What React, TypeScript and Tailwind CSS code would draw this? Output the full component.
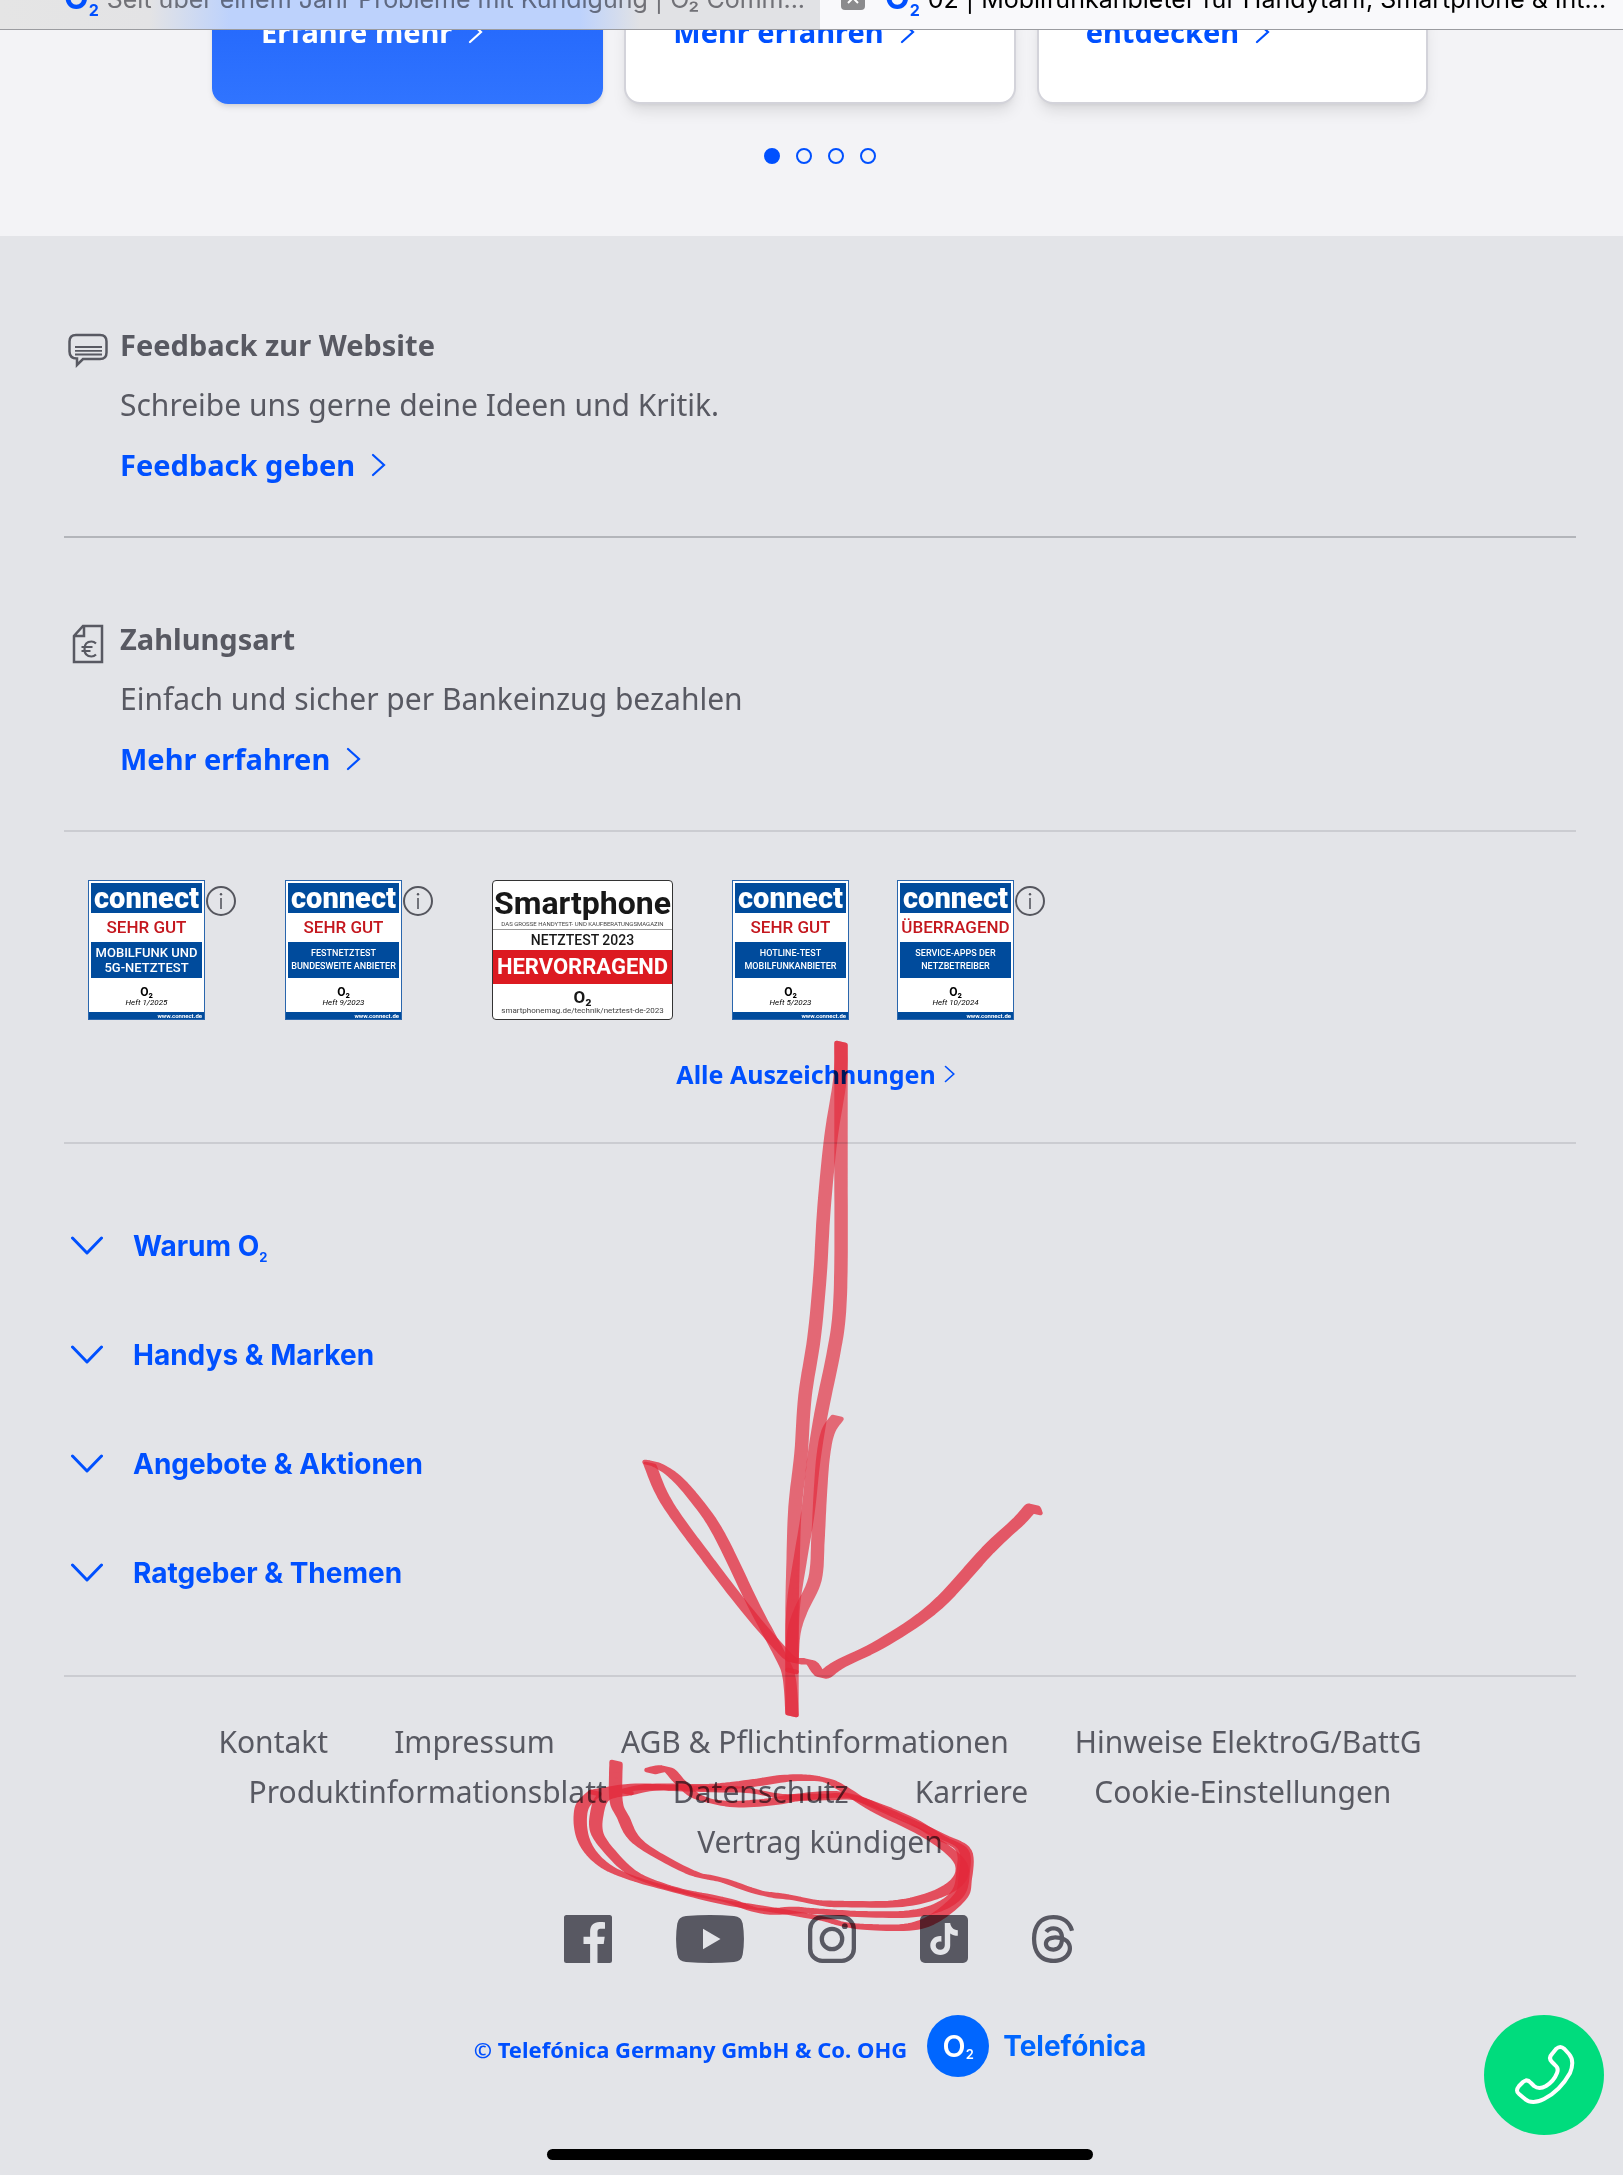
import { useState } from 'react'
import type { ReactNode } from 'react'
import { SiThreads } from 'react-icons/si'

const footerLinks = [
  ['Kontakt', 'Impressum', 'AGB & Pflichtinformationen', 'Hinweise ElektroG/BattG'],
  ['Produktinformationsblatt', 'Datenschutz', 'Karriere', 'Cookie-Einstellungen'],
  ['Vertrag kündigen']
]

type Point = [number, number]

interface Stroke {
  opacity: number
  points: Point[]
}

// Marker strokes, in page pixels
const strokes: Stroke[] = [
  {
    opacity: 0.66,
    points: [[841, 1044], [840, 1079], [831, 1137], [824, 1208], [820, 1275], [814, 1338], [805, 1396], [801, 1454], [795, 1508], [793, 1566], [792, 1610], [792, 1671]]
  },
  {
    opacity: 0.66,
    points: [[841, 1044], [841, 1164], [841, 1262], [839, 1316], [833, 1356], [822, 1409], [814, 1458], [808, 1512], [800, 1561], [793, 1610], [792, 1671]]
  },
  {
    opacity: 0.66,
    points: [[792, 1660], [794, 1632], [801, 1610], [815, 1579], [818, 1539], [820, 1499], [823, 1458], [828, 1432], [837, 1418]]
  },
  {
    opacity: 0.75,
    points: [[792, 1714], [789, 1677], [780, 1655], [754, 1606], [719, 1534], [695, 1499], [674, 1476], [657, 1465], [649, 1463]]
  },
  {
    opacity: 0.75,
    points: [[650, 1465], [667, 1503], [709, 1561], [747, 1610], [778, 1646], [793, 1660], [810, 1662], [818, 1672], [824, 1675], [840, 1664], [884, 1642], [936, 1606], [988, 1550], [1019, 1521], [1032, 1507], [1036, 1512]]
  },
  { opacity: 0.66, points: [[792, 1671], [792, 1714]] },
  {
    opacity: 0.8,
    points: [[616, 1763], [616, 1800], [623, 1817], [639, 1843], [690, 1872], [722, 1880], [761, 1893], [789, 1897], [820, 1903], [842, 1904], [893, 1904], [926, 1898], [951, 1887], [962, 1873], [956, 1857], [926, 1835], [876, 1810], [842, 1788], [821, 1779], [789, 1778], [753, 1783], [714, 1787], [655, 1787], [627, 1792]]
  },
  {
    opacity: 0.8,
    points: [[627, 1792], [604, 1797], [597, 1813], [597, 1833], [611, 1853], [631, 1872], [655, 1883], [686, 1892], [726, 1900], [761, 1911], [797, 1910], [813, 1911], [859, 1914], [909, 1914], [939, 1907], [958, 1893], [963, 1873], [962, 1850], [939, 1837], [905, 1817], [855, 1798], [825, 1797], [785, 1797], [746, 1790], [710, 1789], [674, 1788], [635, 1787], [595, 1793]]
  },
  {
    opacity: 0.8,
    points: [[595, 1793], [582, 1807], [581, 1830], [589, 1850], [607, 1867], [635, 1879], [674, 1890], [722, 1902], [761, 1908], [820, 1918], [842, 1924], [867, 1927], [909, 1927], [935, 1918], [960, 1897], [965, 1880], [965, 1850], [939, 1835], [884, 1810], [846, 1795], [801, 1797], [769, 1802], [730, 1804], [698, 1797], [680, 1782], [667, 1769], [651, 1771]]
  }
]

// Catmull-Rom sampling through the points
function smooth(points: Point[]): Point[] {
  const out: Point[] = []
  for (let i = 0; i < points.length - 1; i++) {
    const p0 = points[i - 1] ?? points[i]
    const p1 = points[i]
    const p2 = points[i + 1]
    const p3 = points[i + 2] ?? p2
    for (let s = 0; s < 8; s++) {
      const t = s / 8
      const at = (k: 0 | 1) =>
        0.5 * (2 * p1[k] + (p2[k] - p0[k]) * t + (2 * p0[k] - 5 * p1[k] + 4 * p2[k] - p3[k]) * t * t + (3 * p1[k] - p0[k] - 3 * p2[k] + p3[k]) * t * t * t)
      out.push([at(0), at(1)])
    }
  }
  out.push(points[points.length - 1])
  return out
}

// Sweeps a flat pen tip along the line
function penPath(points: Point[]) {
  const line = smooth(points)
  const hw = 4.4
  let d = ''
  for (let i = 0; i < line.length - 1; i++) {
    const [x1, y1] = line[i]
    const [x2, y2] = line[i + 1]
    const quad = [[x1 - hw, y1 - 1], [x1 + hw, y1 + 1], [x2 + hw, y2 + 1], [x2 - hw, y2 - 1]]
    if (y2 < y1) quad.reverse()
    d += 'M' + quad.map(([x, y]) => `${x.toFixed(1)} ${y.toFixed(1)}`).join('L') + 'Z'
  }
  return d
}

function Annotation() {
  return (
    <svg className="pointer-events-none absolute top-0 left-0 mix-blend-multiply" width="1100" height="1960" viewBox="0 0 1100 1960" aria-hidden="true">
      {strokes.map((stroke, i) => (
        <path
          key={i}
          d={penPath(stroke.points)}
          opacity={stroke.opacity}
          fill="#ff2d40"
          stroke="#ff2d40"
          strokeWidth="4.600"
          strokeLinejoin="round"
        />
      ))}
    </svg>
  )
}

function Chevron({ small = false }: { small?: boolean }) {
  return (
    <svg className={small ? 'h-5 w-3' : 'h-6 w-4'} viewBox="0 0 16 24" fill="none" stroke="currentColor" strokeWidth="2.2" strokeLinecap="round" aria-hidden="true">
      <path d="M2 2l11 10L2 22" />
    </svg>
  )
}

function TabIcon() {
  return (
    <span className="flex items-end font-['Inter',sans-serif] text-[32px] leading-8 font-bold text-[#0050ff]">
      O<sub className="bottom-0 translate-y-1 text-base leading-4">2</sub>
    </span>
  )
}

function TabBar() {
  return (
    <header className="flex h-[30px] overflow-hidden border-b border-[#9b9ca0] font-['Inter',sans-serif] text-[25px] leading-[30px]">
      <button className="relative flex h-[30px] flex-1 items-end bg-[linear-gradient(90deg,#e5e5e5_0,#e3e3e5_150px,#bdd2fc_230px,#bdd2fc_580px,#e1e2e5_640px)] pb-4 pl-16 text-left">
        <TabIcon />
        <span className="ml-2 whitespace-nowrap text-[#808084] mix-blend-multiply">Seit über einem Jahr Probleme mit Kündigung | O₂ Comm...</span>
      </button>
      <button className="flex h-[30px] w-[803px] items-end bg-[#f9f9fb] pb-4 pl-[21px] text-left text-black">
        <span className="mb-1 flex size-6 items-center justify-center rounded bg-[#8b8b8d]">
          <svg className="size-4" viewBox="0 0 16 16" stroke="white" strokeWidth="2" aria-hidden="true">
            <path d="M3 3l10 10M13 3L3 13" />
          </svg>
        </span>
        <span className="ml-5 flex items-end">
          <TabIcon />
          <span className="ml-2 whitespace-nowrap">02 | Mobilfunkanbieter für Handytarif, Smartphone &amp; Int...</span>
        </span>
      </button>
    </header>
  )
}

function TeaserCards() {
  return (
    <section className="h-[206px] overflow-hidden bg-[#f3f3f6] pr-[195px] pl-[212px]">
      <div className="grid grid-cols-3 gap-[21px] text-[29px] leading-10 font-bold">
        <div className="-mt-5 h-[94px] rounded-b-2xl bg-[linear-gradient(#2468fc,#3074ff)] pl-[49px] text-white shadow-md">
          <a href="#" className="inline-flex items-center gap-4 pt-0.5">Erfahre mehr <Chevron /></a>
        </div>
        <div className="-mt-5 h-[94px] rounded-b-2xl border-2 border-[#d3d3da] bg-white pl-[47px] text-[#0050ff] shadow-lg">
          <a href="#" className="inline-flex items-center gap-4">Mehr erfahren <Chevron /></a>
        </div>
        <div className="-mt-5 h-[94px] rounded-b-2xl border-2 border-[#d3d3da] bg-white pl-[47px] text-[#0050ff] shadow-lg">
          <a href="#" className="inline-flex items-center gap-4">entdecken <Chevron /></a>
        </div>
      </div>
      <div className="mt-[44px] flex justify-center gap-4">
        {[0, 1, 2, 3].map((i) => (
          <button
            key={i}
            aria-label={`Seite ${i + 1}`}
            className={i === 0 ? 'size-4 rounded-full border-2 border-[#0050ff] bg-[#0050ff]' : 'size-4 rounded-full border-2 border-[#0050ff]'}
          />
        ))}
      </div>
    </section>
  )
}

interface InfoBlockProps {
  icon: ReactNode
  title: string
  text: string
  link: string
}

function InfoBlock({ icon, title, text, link }: InfoBlockProps) {
  return (
    <div className="flex text-[30px] leading-[60px]">
      <div className="flex h-[70px] w-14 shrink-0 items-center">{icon}</div>
      <div>
        <h3 className="text-[29px] font-bold">{title}</h3>
        <p>{text}</p>
        <a href="#" className="inline-flex items-center gap-4 text-[29px] font-bold text-[#0050ff]">
          {link} <Chevron />
        </a>
      </div>
    </div>
  )
}

function SpeechIcon() {
  return (
    <svg className="ml-1 h-9 w-10" viewBox="0 0 40 36" fill="none" stroke="currentColor" strokeWidth="2.5" aria-hidden="true">
      <path d="M8 3h24q6.500 0 6.500 6.500v11q0 6.500-6.500 6.500H15l-6 6v-6.500q-7.500 0-7.500-7v-10Q1.500 3 8 3z" />
      <path d="M7 15h27M7 18.800h27M7 22.500h27" strokeWidth="1.800" />
    </svg>
  )
}

function InvoiceIcon() {
  return (
    <svg className="ml-2 h-10 w-8" viewBox="0 0 32 40" fill="none" stroke="currentColor" strokeWidth="2.500" aria-hidden="true">
      <path d="M11 2h19v36H2V12L11 2zM12 2v10H2" />
      <path d="M24 19.500q-2-2-4.500-2-7 0-7 7.500t7 7.500q2.500 0 4.500-2M9.500 23h11M9.500 27h9" strokeWidth="2.200" />
    </svg>
  )
}

function InfoButton() {
  return (
    <button aria-label="Information" className="ml-px mt-1.5 flex size-[30px] shrink-0 items-center justify-center self-start rounded-full border-2 border-[#55565e]">
      <svg className="h-4 w-1" viewBox="0 0 4 16" aria-hidden="true">
        <circle cx="2" cy="1.300" r="1.200" fill="#55565e" />
        <path d="M2 5v11" stroke="#55565e" strokeWidth="1.600" />
      </svg>
    </button>
  )
}

interface AwardProps {
  rating: string
  lines: string[]
  issue: string
  large?: boolean
}

function ConnectAward({ rating, lines, issue, large = false }: AwardProps) {
  return (
    <div className="flex h-[140px] w-[117px] shrink-0 flex-col border border-[#2a66ad] bg-white text-center font-['Roboto',sans-serif]">
      <div className="mx-0.5 mt-0.5 h-[30px] bg-[#004b9c] text-[29px] leading-[30px] font-black text-white">connect</div>
      <div className="h-[29px] text-[17px] leading-[29px] font-medium text-[#c4171e]">{rating}</div>
      <div className={large ? 'mx-0.5 flex h-9 flex-col justify-center bg-[#004b9c] text-[13px] leading-[15px] font-medium whitespace-nowrap text-white' : 'mx-0.5 flex h-9 flex-col justify-center bg-[#004b9c] text-[9px] leading-[13px] font-medium whitespace-nowrap text-white'}>
        {lines.map((line) => (
          <div key={line}>{line}</div>
        ))}
      </div>
      <div className="mt-2 text-[12px] leading-3 font-bold text-black">O₂</div>
      <div className="text-[8px] leading-[10px] italic text-black">{issue}</div>
      <div className="mt-auto h-[7px] bg-[#004b9c] pr-0.5 text-right text-[6px] leading-[7px] font-bold text-white">www.connect.de</div>
    </div>
  )
}

function SmartphoneAward() {
  return (
    <div className="flex h-[140px] w-[181px] shrink-0 flex-col overflow-hidden rounded border border-[#333] bg-white text-center font-['Roboto',sans-serif] whitespace-nowrap text-[#181818]">
      <div className="mt-1 h-9 text-[32px] leading-9 font-bold">Smartphone</div>
      <div className="h-[9px] border-b border-[#999] text-[6px] leading-[6px] text-[#444]">DAS GROSSE HANDYTEST- UND KAUFBERATUNGSMAGAZIN</div>
      <div className="h-5 text-[14px] leading-5 font-medium">NETZTEST 2023</div>
      <div className="h-[34px] bg-[#dc1a21] text-[22px] leading-[34px] font-bold text-white">HERVORRAGEND</div>
      <div className="mt-1 h-[18px] text-[17px] leading-[18px] font-bold">O₂</div>
      <div className="text-[8px] leading-[10px] text-[#444]">smartphonemag.de/technik/netztest-de-2023</div>
    </div>
  )
}

function AwardList() {
  return (
    <div className="border-b-2 border-[#cbccd1] pt-12 pb-12">
      <div className="flex pl-6">
        <div className="flex w-[197px]">
          <ConnectAward rating="SEHR GUT" lines={['MOBILFUNK UND', '5G-NETZTEST']} issue="Heft 1/2025" large />
          <InfoButton />
        </div>
        <div className="flex w-[207px]">
          <ConnectAward rating="SEHR GUT" lines={['FESTNETZTEST', 'BUNDESWEITE ANBIETER']} issue="Heft 9/2023" />
          <InfoButton />
        </div>
        <div className="flex w-60">
          <SmartphoneAward />
        </div>
        <div className="flex w-[165px]">
          <ConnectAward rating="SEHR GUT" lines={['HOTLINE-TEST', 'MOBILFUNKANBIETER']} issue="Heft 5/2023" />
        </div>
        <div className="flex">
          <ConnectAward rating="ÜBERRAGEND" lines={['SERVICE-APPS DER', 'NETZBETREIBER']} issue="Heft 10/2024" />
          <InfoButton />
        </div>
      </div>
      <div className="mt-[34px] flex justify-center pr-2 text-[25px] leading-10 font-bold">
        <a href="#" className="inline-flex items-center gap-2 text-[#0050ff]">
          Alle Auszeichnungen <Chevron small />
        </a>
      </div>
    </div>
  )
}

function Accordion() {
  const [open, setOpen] = useState<number | null>(null)
  const items: ReactNode[] = [
    <>Warum O<sub className="bottom-0 inline-block translate-y-1.5 text-[13px] leading-3">2</sub></>,
    'Handys & Marken',
    'Angebote & Aktionen',
    'Ratgeber & Themen'
  ]

  return (
    <div className="border-b-2 border-[#cbccd1] pt-[47px] pb-12">
      {items.map((item, i) => (
        <button
          key={i}
          aria-expanded={open === i}
          onClick={() => setOpen(open === i ? null : i)}
          className="flex h-[109px] w-full items-center gap-[30px] pl-[7px] text-left font-['Inter',sans-serif] text-[28px] font-bold text-[#0050ff]"
        >
          <svg className="h-5 w-8" viewBox="0 0 32 20" fill="none" stroke="currentColor" strokeWidth="3" strokeLinecap="round" strokeLinejoin="round" aria-hidden="true">
            <path d="M1.500 2l14.500 15L30.500 2" />
          </svg>
          <span className="leading-[34px]">{item}</span>
        </button>
      ))}
    </div>
  )
}

function SocialLinks() {
  return (
    <div className="mt-12 flex justify-center gap-16 pr-0.5 text-[#585862]">
      <a href="#" aria-label="Facebook">
        <svg className="size-12" viewBox="0 0 48 48" aria-hidden="true">
          <path fill="currentColor" d="M2.500 0h43Q48 0 48 2.500v43q0 2.500-2.500 2.500H33.500V29h6.200l1-7.200h-7.200v-4.600c0-2.100.6-3.500 3.600-3.500H41V7.300c-.7-.1-3-.3-5.600-.3-5.600 0-9.300 3.400-9.300 9.600v5.200h-6.600V29h6.600v19H2.500Q0 48 0 45.500v-43Q0 0 2.500 0z" />
        </svg>
      </a>
      <a href="#" aria-label="YouTube">
        <svg className="h-12 w-[68px]" viewBox="0 0 68 48" aria-hidden="true">
          <path fill="currentColor" fillRule="evenodd" d="M10 .900Q34-.800 58 .900q7.500.500 8.700 7.500Q69.200 24 66.700 39.600q-1.200 7-8.700 7.500Q34 48.800 10 47.100q-7.500-.500-8.700-7.500-2.500-15.600 0-31.200Q2.500 1.400 10 .900zM27 13.800v20.400L44.500 24z" />
        </svg>
      </a>
      <a href="#" aria-label="Instagram">
        <svg className="size-12" viewBox="0 0 48 48" fill="none" stroke="currentColor" strokeWidth="4.300" aria-hidden="true">
          <rect x="2.150" y="2.150" width="43.700" height="43.700" rx="12" />
          <circle cx="24" cy="24" r="10.200" />
          <circle cx="36.800" cy="11.200" r="2.900" fill="currentColor" stroke="none" />
        </svg>
      </a>
      <a href="#" aria-label="TikTok">
        <svg className="size-12" viewBox="0 0 48 48" aria-hidden="true">
          <rect width="48" height="48" rx="5" fill="currentColor" />
          <path fill="#e3e4e8" d="M24.800 8h5.400c.5 4 3.200 7 7.600 7.300v5.400c-2.900 0-5.500-.8-7.600-2.300v12.100c0 5.800-4.400 9.500-9.800 9.500S10.300 35.800 10.300 30.500c0-5.600 4.700-10 11.100-9.400v5.700c-3.200-.8-5.700 1-5.700 3.700 0 2.500 2 4.300 4.500 4.300 2.700 0 4.600-1.800 4.600-4.900z" />
        </svg>
      </a>
      <a href="#" aria-label="Threads" className="flex w-[42px] justify-center">
        <SiThreads className="size-12 shrink-0" />
      </a>
    </div>
  )
}

function Footer() {
  return (
    <footer className="bg-[#e3e4e8] pr-[47px] pb-[15px] pl-16 text-[#585962]">
      <div className="border-b-2 border-[#b3b5ba] pt-[79px] pb-[41px]">
        <InfoBlock icon={<SpeechIcon />} title="Feedback zur Website" text="Schreibe uns gerne deine Ideen und Kritik." link="Feedback geben" />
      </div>
      <div className="border-b-2 border-[#cbccd1] pt-[71px] pb-[41px]">
        <InfoBlock icon={<InvoiceIcon />} title="Zahlungsart" text="Einfach und sicher per Bankeinzug bezahlen" link="Mehr erfahren" />
      </div>
      <AwardList />
      <Accordion />
      <nav className="pt-10 text-[30px] leading-[50px]">
        {footerLinks.map((row) => (
          <div key={row[0]} className="flex justify-center gap-[66px]">
            {row.map((label) => (
              <a key={label} href="#" className="whitespace-nowrap">{label}</a>
            ))}
          </div>
        ))}
      </nav>
      <SocialLinks />
      <div className="mt-[52px] flex items-center justify-center pr-5 text-[#0050ff]">
        <a href="#" className="pt-1.5 text-[22px] font-bold">© Telefónica Germany GmbH &amp; Co. OHG</a>
        <a href="#" className="ml-5 flex items-center gap-[14px] font-['Inter',sans-serif] text-[#0066ff]">
          <span className="flex size-[62px] items-center justify-center rounded-full bg-[#0066ff] text-[30px] leading-[62px] font-semibold text-white">
            O<sub className="bottom-0 translate-y-2 text-[13px]">2</sub>
          </span>
          <span className="text-[28px] font-bold">Telefónica</span>
        </a>
      </div>
      <div className="mx-auto mt-[72px] h-[11px] w-[546px] rounded-full bg-black" />
    </footer>
  )
}

export default function App() {
  return (
    <div className="relative min-h-screen overflow-x-hidden bg-[#e3e4e8] font-['Noto_Sans','Open_Sans',sans-serif]">
      <TabBar />
      <main>
        <TeaserCards />
        <Footer />
      </main>
      <Annotation />
      <button aria-label="Anrufen" className="absolute right-[19px] bottom-10 size-[120px] rounded-full bg-[#00dc7d]">
        <svg viewBox="0 0 120 120" fill="none" stroke="white" strokeWidth="4" strokeLinejoin="round" aria-hidden="true">
          <path d="M72 34Q76.300 30 80.500 34L85 39Q91 46 86 58 76 76 60 84 48 90 41 84L35 79Q31 76 35 71L39 67Q43 63.500 47 68L50 71Q55 75 62 71 70 66 73 58 75 53 71 50L68 47Q64 43 68 39Z" />
        </svg>
      </button>
    </div>
  )
}
